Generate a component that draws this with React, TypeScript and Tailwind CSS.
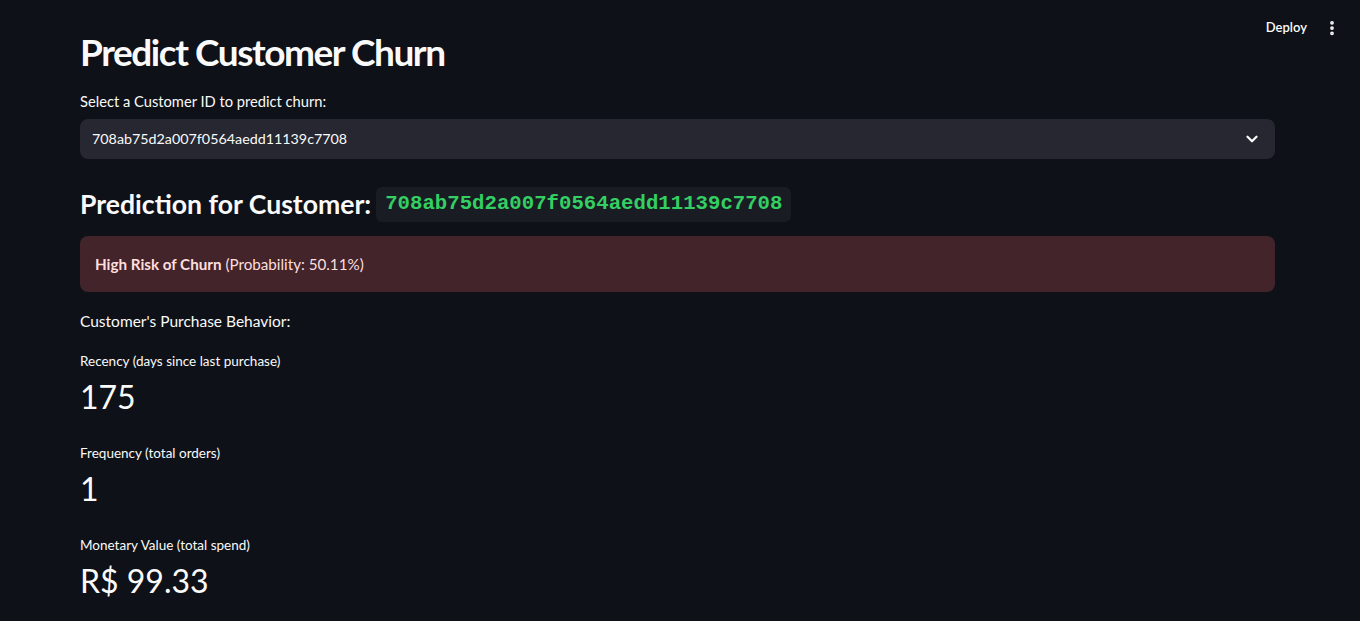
import React from 'react';
import { ChevronDown, EllipsisVertical } from 'lucide-react';

const metrics = [
  { label: 'Recency (days since last purchase)', value: '175' },
  { label: 'Frequency (total orders)', value: '1' },
  { label: 'Monetary Value (total spend)', value: 'R$ 99.33' },
];

const customerId = '708ab75d2a007f0564aedd11139c7708';

const App: React.FC = () => {
  return (
    <div
      className="min-h-screen w-full bg-[#0e1117] text-[#fafafa] relative"
      style={{ fontFamily: 'Lato, "Noto Sans", sans-serif' }}
    >
      <header className="absolute top-0 right-0 h-[56px] flex items-center gap-2 pr-[19px]">
        <button className="text-[13px] font-semibold text-[#fafafa] px-2 py-1">Deploy</button>
        <EllipsisVertical size={18} strokeWidth={3} className="text-[#fafafa]" />
      </header>

      <main className="pl-[80px] pr-[85px] pt-[28px] flex flex-col">
        <h1 className="text-[37px] font-bold leading-[48px] tracking-[-1.45px]">Predict Customer Churn</h1>

        <label className="mt-[16px] text-[14.7px] leading-[18px]">Select a Customer ID to predict churn:</label>
        <div className="mt-[9px] h-[40px] rounded-lg bg-[#262730] flex items-center justify-between pl-[12px] pr-[14px]">
          <span className="text-[14.3px]">{customerId}</span>
          <ChevronDown size={18} strokeWidth={3} className="text-[#fafafa]" />
        </div>

        <div className="mt-[27px] flex items-center gap-[5px]">
          <h3 className="text-[26.6px] font-bold leading-[36px]">Prediction for Customer:</h3>
          <code
            className="bg-[#1a1c24] text-[#33cf62] rounded-md px-[9px] h-[35px] flex items-center text-[20.7px] font-bold"
            style={{ fontFamily: '"Liberation Mono", monospace' }}
          >
            {customerId}
          </code>
        </div>

        <div className="mt-[14px] h-[56px] rounded-lg bg-[#42242a] flex items-center px-[15px] text-[15.2px] text-[#ffdede]">
          <span>
            <strong className="font-bold">High Risk of Churn</strong> (Probability: 50.11%)
          </span>
        </div>

        <p className="mt-[18px] text-[15.5px] leading-[22px]">Customer's Purchase Behavior:</p>

        <div className="mt-[19px] flex flex-col gap-[24px]">
          {metrics.map((m) => (
            <div key={m.label} className="flex flex-col">
              <span className="text-[13.5px] leading-[20px]">{m.label}</span>
              <span className="mt-[4px] text-[32px] leading-[44px]">{m.value}</span>
            </div>
          ))}
        </div>
      </main>
    </div>
  );
};

export default App;
